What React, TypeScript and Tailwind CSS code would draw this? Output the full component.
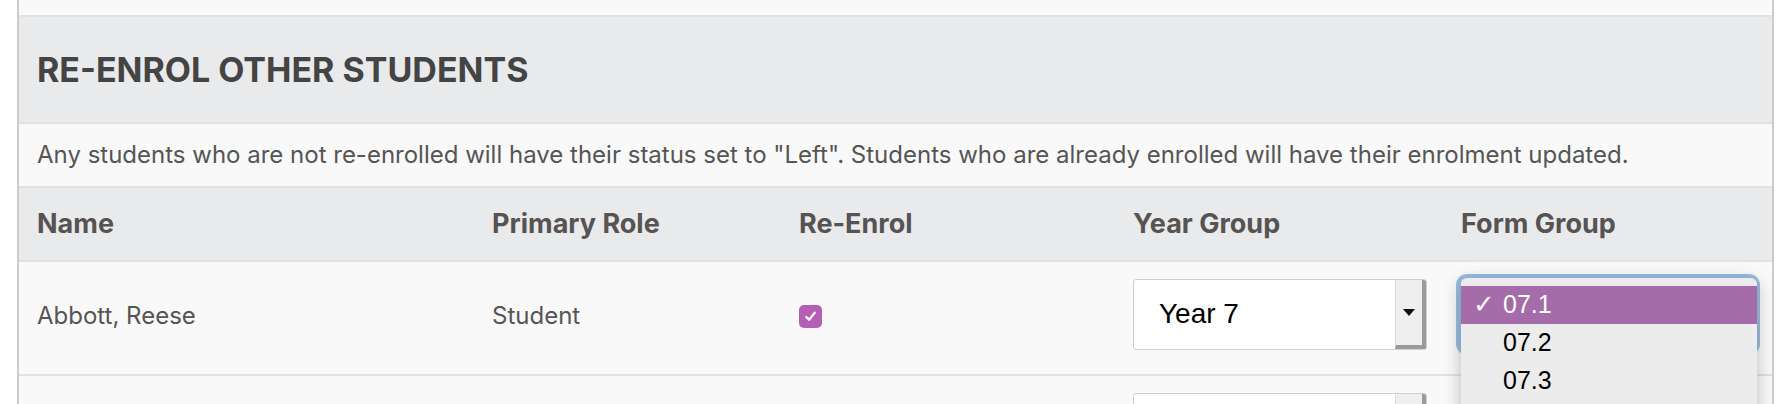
import React from "react";

const inter = { fontFamily: "Inter, 'Noto Sans', sans-serif" };

function NativeSelect({ value }: { value?: string }) {
  return (
    <div className="flex h-[71px] w-[294px] overflow-hidden rounded-[3px] border border-[#cfcfcf] bg-white">
      <div className="flex flex-1 items-center pl-[25px] text-[28px] text-black" style={{ fontFamily: "'Liberation Sans', Arial, sans-serif" }}>
        {value}
      </div>
      <div className="flex w-[31px] items-center justify-center border-l border-[#dcdcdc] border-r-[4px] border-b-[4px] border-r-[#9a9a9a] border-b-[#9a9a9a] bg-[#efefef]">
        <svg width="12" height="7" viewBox="0 0 12 7">
          <path d="M0 0 L12 0 L6 7 Z" fill="#111" />
        </svg>
      </div>
    </div>
  );
}

export default function App() {
  return (
    <div className="h-[404px] overflow-hidden bg-white">
      <div className="ml-[17px] w-[1757px] border-x-2 border-[#cccccc] bg-[#f9f9f9]" style={inter}>
        <div className="h-[17px] border-b-2 border-[#e2e2e2]" />
        <div className="flex h-[107px] items-center border-b-2 border-[#e2e2e2] bg-[#e9eaec] px-[18px]">
          <h2 className="text-[34px] font-bold text-[#444444]">RE-ENROL OTHER STUDENTS</h2>
        </div>
        <div className="flex h-[64px] items-center border-b-2 border-[#e2e2e2] px-[18px] text-[24px] text-[#555555]">
          Any students who are not re-enrolled will have their status set to "Left". Students who are already enrolled will have their enrolment updated.
        </div>
        <div className="grid h-[74px] grid-cols-[455px_307px_334px_328px_1fr] items-center border-b-2 border-[#e2e2e2] bg-[#e9eaec] px-[18px] text-[27px] font-bold text-[#575352]">
          <div>Name</div>
          <div>Primary Role</div>
          <div>Re-Enrol</div>
          <div>Year Group</div>
          <div>Form Group</div>
        </div>
        <div className="grid h-[114px] grid-cols-[455px_307px_334px_328px_1fr] items-center border-b-2 border-[#e2e2e2] px-[18px] pb-[4px] text-[24px] text-[#555555]">
          <div>Abbott, Reese</div>
          <div>Student</div>
          <div>
            <div className="flex h-[23px] w-[23px] items-center justify-center rounded-[5px] bg-[#b55fb4]">
              <svg width="15" height="15" viewBox="0 0 16 16">
                <path d="M3.5 8.5 L6.5 11.5 L12.5 4" fill="none" stroke="white" strokeWidth="2.4" strokeLinecap="round" strokeLinejoin="round" />
              </svg>
            </div>
          </div>
          <div className="mb-[4px]">
            <NativeSelect value="Year 7" />
          </div>
          <div className="relative mb-[4px]">
            <div className="rounded-[6px] shadow-[0_0_0_5px_rgba(120,170,215,0.75)]">
              <NativeSelect />
            </div>
            <div
              className="absolute left-0 top-[-1px] z-10 w-[296px] overflow-hidden rounded-t-[6px] bg-[#ececec] pt-[8px] text-[25px] text-black shadow-[0_4px_18px_rgba(0,0,0,0.25)]"
              style={{ fontFamily: "'Liberation Sans', Arial, sans-serif" }}
            >
              <div className="flex h-[38px] items-center bg-[#a46ca8] text-white">
                <span className="w-[42px] pl-[12px] text-[26px]">✓</span>
                <span>07.1</span>
              </div>
              <div className="flex h-[38px] items-center">
                <span className="w-[42px]" />
                <span>07.2</span>
              </div>
              <div className="flex h-[38px] items-center">
                <span className="w-[42px]" />
                <span>07.3</span>
              </div>
              <div className="h-[38px]" />
            </div>
          </div>
        </div>
        <div className="grid h-[60px] grid-cols-[455px_307px_334px_328px_1fr] items-start px-[18px] pt-[17px]">
          <div />
          <div />
          <div />
          <div>
            <NativeSelect />
          </div>
          <div>
            <NativeSelect />
          </div>
        </div>
      </div>
    </div>
  );
}
